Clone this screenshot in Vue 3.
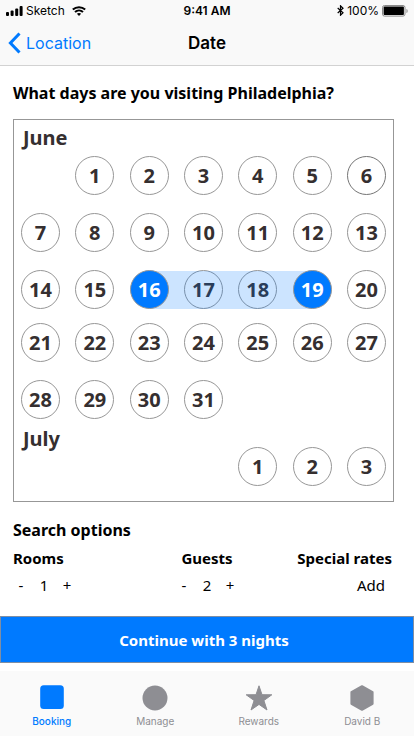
<script setup>
import { computed, ref } from 'vue'

const range = (from, to) => Array.from({ length: to - from + 1 }, (_, i) => from + i)

const months = [
  { name: 'June', offset: 1, days: range(1, 31) },
  { name: 'July', offset: 4, days: range(1, 3) },
]

const today = 6
const checkIn = ref(16)
const checkOut = ref(19)
const rooms = ref(1)
const guests = ref(2)
const nights = computed(() => checkOut.value - checkIn.value)

const calendar = months.map((month) => {
  const cells = [...Array(month.offset).fill(null), ...month.days]
  const weeks = []
  for (let i = 0; i < cells.length; i += 7) weeks.push(cells.slice(i, i + 7))
  return { name: month.name, weeks }
})

const isEdge = (month, day) =>
  month === 'June' && (day === checkIn.value || day === checkOut.value)
const isToday = (month, day) => month === 'June' && day === today
const hasStay = (month, week) => month === 'June' && week.includes(checkIn.value)
</script>

<template>
  <div class="screen">
    <header class="top">
      <div class="status">
        <div class="carrier">
          <svg width="17" height="10" viewBox="0 0 17 10" aria-hidden="true">
            <rect x="0" y="6" width="3" height="4" rx="1" />
            <rect x="4.6" y="4.5" width="3" height="5.5" rx="1" />
            <rect x="9.2" y="2.5" width="3" height="7.5" rx="1" />
            <rect x="13.6" y="0" width="3" height="10" rx="1" />
          </svg>
          <span>Sketch</span>
          <svg class="wifi" width="14" height="10" viewBox="0 0 14 10" aria-hidden="true">
            <path d="M0.8 3.6C4.3 0.3 9.7 0.3 13.2 3.6" />
            <path d="M3 6C5.3 3.9 8.7 3.9 11 6" />
            <path class="dot" d="M7 10L4.9 7.8C6.1 6.8 7.9 6.8 9.1 7.8Z" />
          </svg>
        </div>
        <span class="clock">9:41 AM</span>
        <div class="power">
          <svg class="bluetooth" width="7" height="11" viewBox="0 0 7 11" aria-hidden="true">
            <path d="M0.7 3L6 7.8L3.5 10.2V0.8L6 3.2L0.7 8" />
          </svg>
          <span>100%</span>
          <svg width="26" height="12" viewBox="0 0 26 12" aria-hidden="true">
            <rect x="0.5" y="0.5" width="22.5" height="10.6" rx="2" fill="none" stroke="#8a8a8a" />
            <rect x="1.6" y="1.6" width="20.3" height="8.4" rx="0.8" />
            <path d="M24.4 4v4c1-.4 1.3-1.1 1.3-2s-.3-1.6-1.3-2z" fill="#999" />
          </svg>
        </div>
      </div>
      <nav class="nav">
        <a class="back" href="#location">
          <svg width="13" height="22" viewBox="0 0 13 22" aria-hidden="true">
            <path d="M11.5 1.5L2.4 11L11.5 20.5" />
          </svg>
          <span>Location</span>
        </a>
        <h1>Date</h1>
      </nav>
    </header>

    <main class="content">
      <h2 class="question">What days are you visiting Philadelphia?</h2>

      <section class="calendar" aria-label="Calendar">
        <div v-for="month in calendar" :key="month.name" class="month">
          <h3>{{ month.name }}</h3>
          <div
            v-for="(week, w) in month.weeks"
            :key="w"
            class="week"
            :class="{ stay: hasStay(month.name, week) }"
          >
            <template v-for="(day, d) in week" :key="d">
              <span v-if="day === null"></span>
              <button
                v-else
                type="button"
                class="day"
                :class="{ edge: isEdge(month.name, day), today: isToday(month.name, day) }"
              >
                {{ day }}
              </button>
            </template>
            <span v-if="hasStay(month.name, week)" class="band"></span>
          </div>
        </div>
      </section>

      <section class="options">
        <h2>Search options</h2>
        <div class="columns">
          <div class="option">
            <h3>Rooms</h3>
            <div class="stepper">
              <button type="button" @click="rooms--">-</button>
              <span>{{ rooms }}</span>
              <button type="button" @click="rooms++">+</button>
            </div>
          </div>
          <div class="option guests">
            <h3>Guests</h3>
            <div class="stepper">
              <button type="button" @click="guests--">-</button>
              <span>{{ guests }}</span>
              <button type="button" @click="guests++">+</button>
            </div>
          </div>
          <div class="option rates">
            <h3>Special rates</h3>
            <button type="button" class="add">Add</button>
          </div>
        </div>
      </section>
    </main>

    <button type="button" class="continue">Continue with {{ nights }} nights</button>

    <nav class="tabs">
      <a class="tab active" href="#booking">
        <svg width="28" height="26" viewBox="0 0 28 26" aria-hidden="true">
          <rect x="2.2" y="0.3" width="23.6" height="23.6" rx="3.5" />
        </svg>
        <span>Booking</span>
      </a>
      <a class="tab" href="#manage">
        <svg width="28" height="26" viewBox="0 0 28 26" aria-hidden="true">
          <circle cx="14" cy="13" r="12.5" />
        </svg>
        <span>Manage</span>
      </a>
      <a class="tab" href="#rewards">
        <svg width="28" height="26" viewBox="0 0 28 26" aria-hidden="true">
          <path
            d="M14 0.8L17 9.7L26.8 9.8L18.9 15.5L22 25L14 19.4L6 25L9.1 15.5L1.2 9.8L11 9.7Z"
            stroke="currentColor" stroke-width="1" stroke-linejoin="round"
          />
        </svg>
        <span>Rewards</span>
      </a>
      <a class="tab" href="#david">
        <svg width="28" height="26" viewBox="0 0 28 26" aria-hidden="true">
          <path
            d="M14 1.2L24.6 7.2V18.8L14 24.8L3.4 18.8V7.2Z"
            stroke="currentColor" stroke-width="2" stroke-linejoin="round"
          />
        </svg>
        <span>David B</span>
      </a>
    </nav>
  </div>
</template>

<style>
body {
  margin: 0;
  background: #fff;
}
</style>

<style scoped>
.screen {
  display: flex;
  flex-direction: column;
  min-height: 100vh;
  color: #000;
  font-family: "Noto Sans", sans-serif;
}

h1,
h2,
h3 {
  margin: 0;
  font-size: 15px;
  font-weight: 700;
}

button {
  margin: 0;
  padding: 0;
  border: 0;
  background: none;
  color: inherit;
  font: inherit;
  cursor: pointer;
}

a {
  color: #007aff;
  text-decoration: none;
}

.top {
  border-bottom: 1px solid #d2d2d2;
  background: #f9f9f9;
  font-family: Inter, sans-serif;
}

.status {
  display: grid;
  grid-template-columns: 1fr auto 1fr;
  align-items: center;
  height: 21px;
  padding: 0 6px;
  font-size: 12px;
}

.carrier,
.power {
  display: flex;
  align-items: center;
  gap: 3px;
}

.power {
  justify-content: flex-end;
}

.clock {
  font-weight: 600;
}

.wifi {
  margin-left: 4px;
  fill: none;
  stroke: #000;
  stroke-width: 2;
}

.wifi .dot {
  fill: #000;
  stroke: none;
}

.bluetooth {
  fill: none;
  stroke: #000;
  stroke-width: 1.2;
}

.nav {
  display: grid;
  grid-template-columns: 1fr auto 1fr;
  align-items: center;
  height: 44px;
  padding: 0 8px;
}

.nav h1 {
  font-size: 17px;
  font-weight: 600;
}

.back {
  display: flex;
  align-items: center;
  gap: 5px;
  font-size: 16px;
}

.back svg {
  fill: none;
  stroke: #007aff;
  stroke-width: 3;
}

.content {
  flex: 1;
  padding: 16px 13px 0;
}

.question {
  font-size: 16px;
  line-height: 22px;
}

.calendar {
  margin: 15px 7px 0 0;
  padding: 0 7px 15px;
  border: 1px solid #979797;
  color: #352f30;
}

.month h3 {
  padding-left: 2px;
  font-size: 20px;
  line-height: 36px;
}

.month + .month h3 {
  margin: 2px 0 -10px;
}

.week {
  position: relative;
  display: grid;
  grid-template-columns: repeat(7, 39px);
  grid-template-rows: 39px;
  justify-content: space-between;
}

.week + .week {
  margin-top: 18px;
}

.week.stay + .week {
  margin-top: 14px;
}

.day {
  border: 1px solid #979797;
  border-radius: 50%;
  font-size: 20px;
  font-weight: 700;
  line-height: 37px;
}

.day.today {
  border-color: #757575;
}

.day.edge {
  z-index: 1;
  background: #007aff;
  color: #fff;
}

.band {
  position: absolute;
  inset: 1px 20px 0;
  grid-column: 3 / 7;
  background: rgba(0, 122, 255, 0.2);
  pointer-events: none;
}

.options {
  margin-top: 18px;
  line-height: 20px;
}

.options h2 {
  font-size: 16px;
}

.columns {
  display: grid;
  grid-template-columns: 1fr auto 1fr;
  margin-top: 8px;
}

.guests {
  text-align: center;
}

.rates {
  padding-right: 9px;
  text-align: right;
}

.stepper {
  display: flex;
  gap: 7px;
  margin-top: 7px;
  font-size: 15px;
}

.stepper > * {
  width: 16px;
  text-align: center;
}

.add {
  margin: 7px 7px 0 0;
  font-size: 15px;
}

.continue {
  height: 47px;
  margin-bottom: 8px;
  padding-right: 6px;
  border: 1px solid #7f8ea3;
  background: #007aff;
  color: #fff;
  font-size: 15px;
  font-weight: 700;
}

.tabs {
  display: grid;
  grid-template-columns: repeat(4, 1fr);
  height: 65px;
  background: #fafafa;
}

.tab {
  display: flex;
  flex-direction: column;
  align-items: center;
  gap: 4px;
  padding-top: 14px;
  color: #8e8e93;
  font-family: Inter, sans-serif;
  font-size: 10px;
  line-height: 13px;
}

.tab svg {
  fill: currentColor;
}

.tab.active {
  color: #007aff;
  font-weight: 500;
}
</style>
